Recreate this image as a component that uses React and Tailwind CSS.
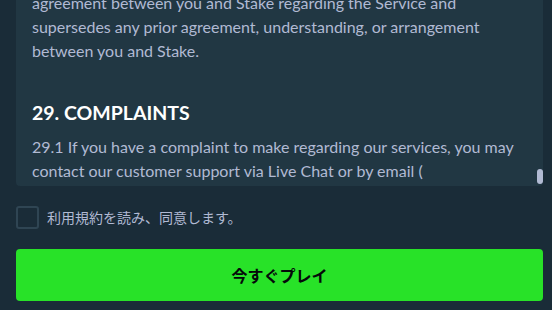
import { useState } from 'react';

export default function App() {
    const [agreed, setAgreed] = useState(false);

    return (
        <div className="w-[552px] h-[310px] bg-[#1a2c38] pl-4 pr-[9px] overflow-hidden" style={{ fontFamily: '"Lato", "Noto Sans CJK JP", sans-serif' }}>
            <div className="relative h-[186px] bg-[#213743] rounded-b overflow-hidden">
                <div className="px-4 -mt-[9px] text-[16px] leading-6 text-[#b1bad3] whitespace-nowrap">
                    <p>
                        agreement between you and Stake regarding the Service and<br />
                        supersedes any prior agreement, understanding, or arrangement<br />
                        between you and Stake.
                    </p>
                    <h2 className="mt-[38px] mb-[10px] text-[19.5px] leading-6 font-bold text-white">29. COMPLAINTS</h2>
                    <p>
                        29.1 If you have a complaint to make regarding our services, you may<br />
                        contact our customer support via Live Chat or by email (
                    </p>
                </div>
                <div className="absolute right-0 top-[169px] w-[6px] h-[15px] rounded-full bg-[#b1bad3]"></div>
            </div>

            <label className="flex items-center gap-2 mt-5 cursor-pointer">
                <input type="checkbox" className="hidden" checked={agreed} onChange={() => setAgreed(!agreed)} />
                <span className="w-[23px] h-[23px] rounded-[3px] border-2 border-[#2f4553] bg-[#1a2c38]"></span>
                <span className="text-[14px] text-[#b1bad3]" style={{ fontFamily: '"Noto Sans CJK JP", sans-serif' }}>利用規約を読み、同意します。</span>
            </label>

            <button className="mt-5 w-full h-[52px] rounded bg-[#28e228] text-[#05080a] text-[16px] font-bold" style={{ fontFamily: '"Noto Sans CJK JP", sans-serif' }}>
                今すぐプレイ
            </button>
        </div>
    );
}
